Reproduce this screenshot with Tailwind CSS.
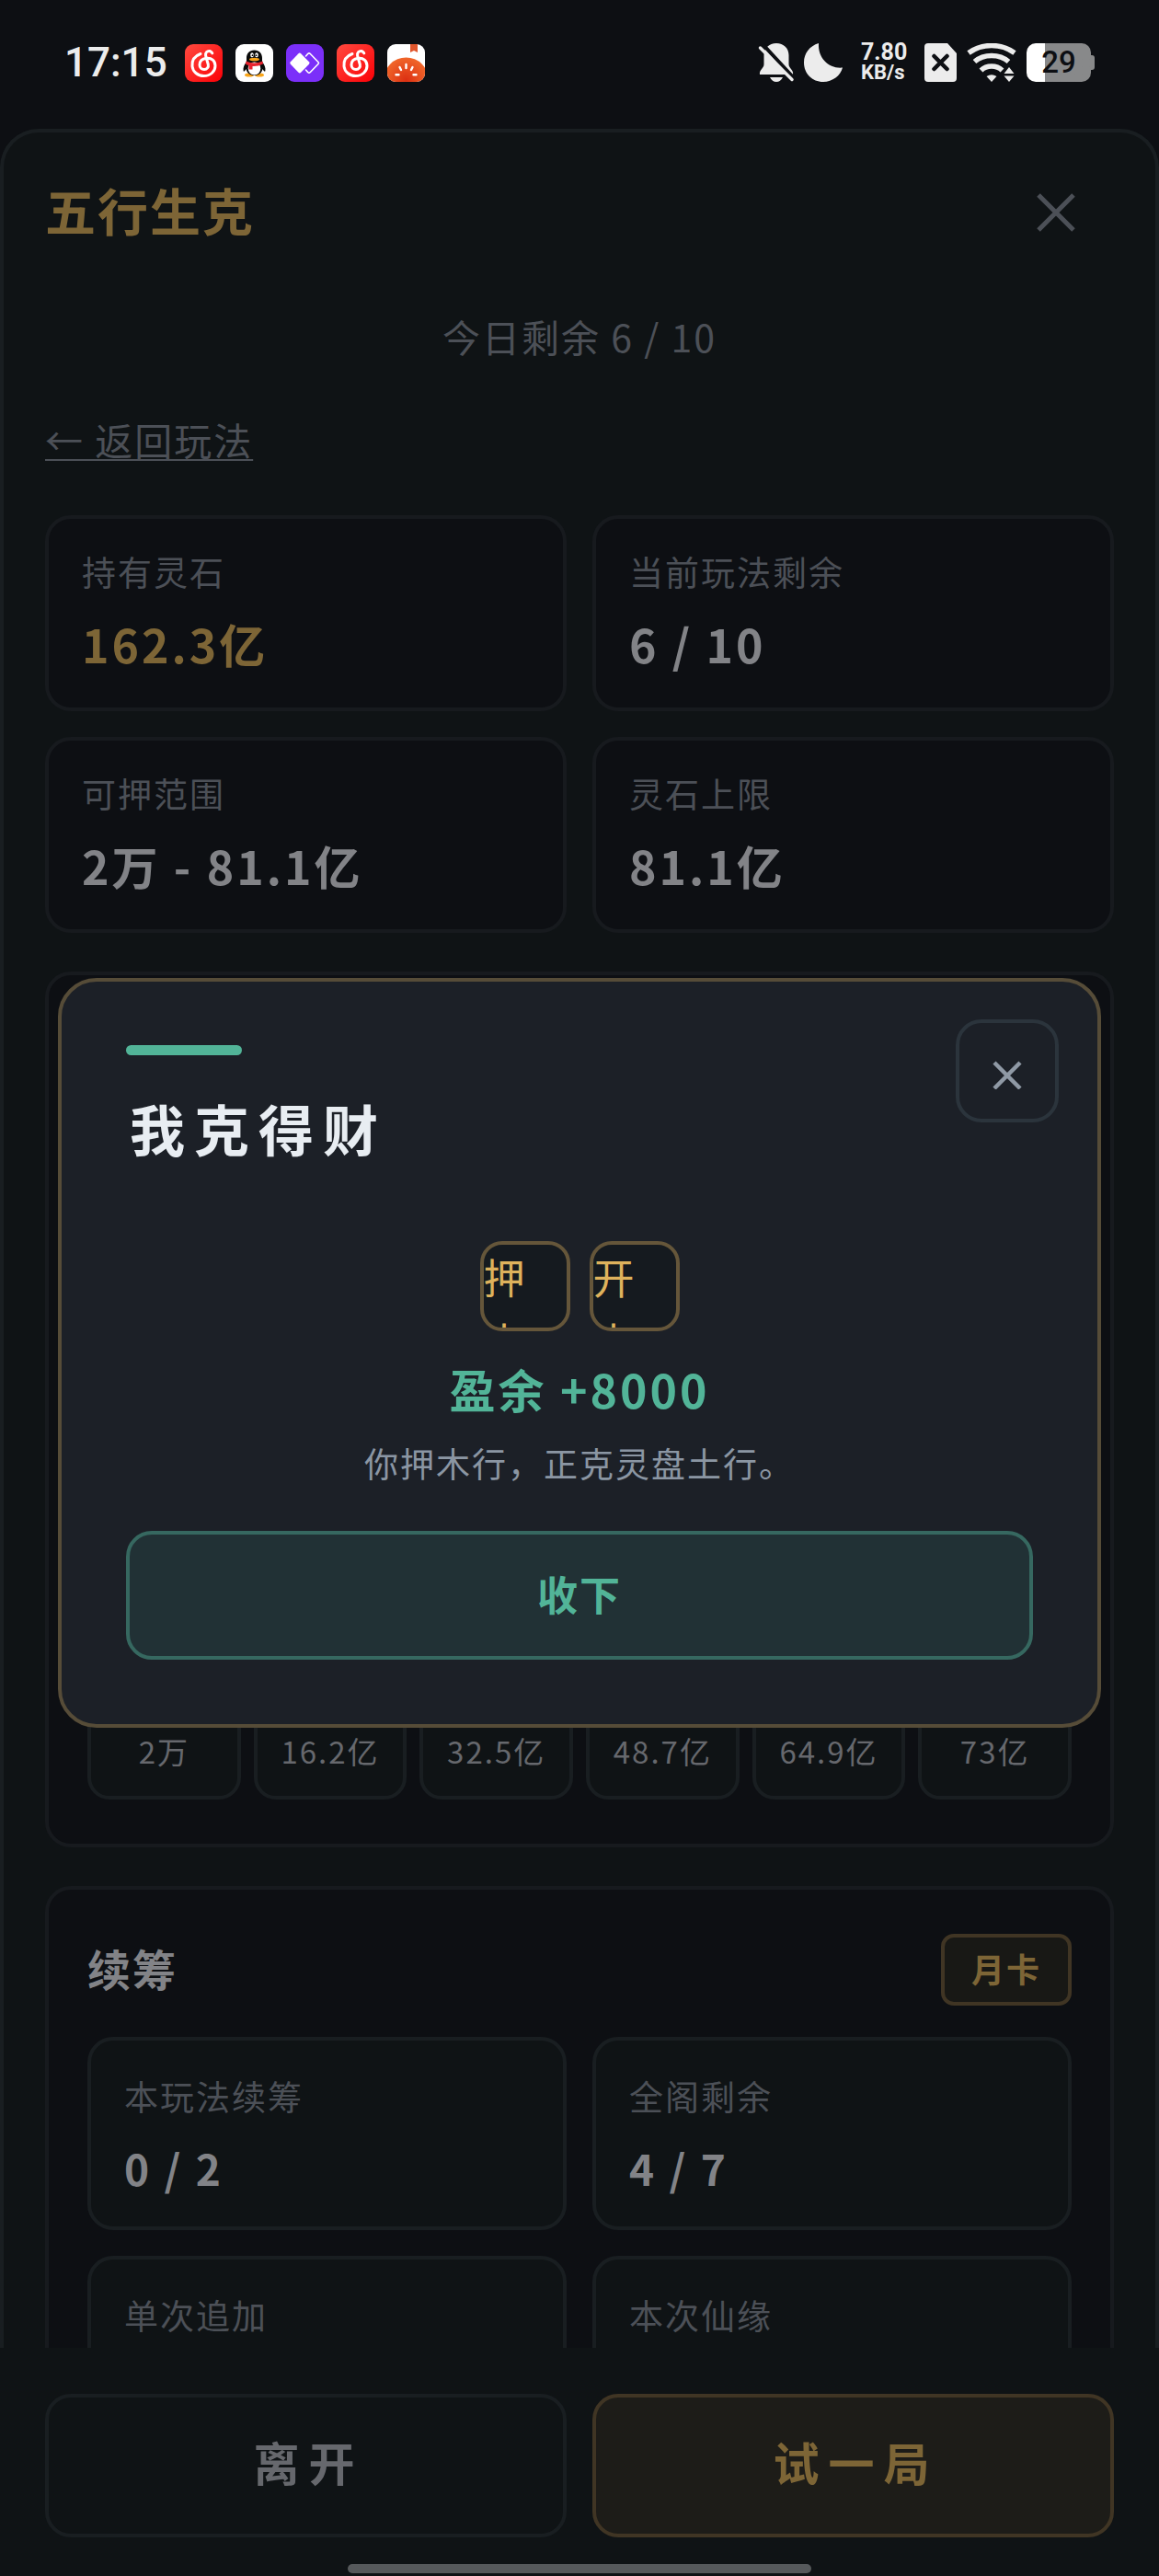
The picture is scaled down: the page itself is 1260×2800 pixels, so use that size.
<!DOCTYPE html>
<html lang="zh-CN">
<head>
  <meta charset="UTF-8">
  <meta name="viewport" content="width=device-width, initial-scale=1.0">
  <title>五行生克</title>
  <script src="https://cdn.jsdelivr.net/npm/@tailwindcss/browser@4"></script>
</head>
<body class="flex h-screen flex-col overflow-hidden bg-[#0d0f13] font-['Noto_Sans_CJK_SC',sans-serif] tracking-[2px] text-[#828387]">

  <!-- Status bar -->
  <div class="flex h-[140px] shrink-0 justify-between px-[70px] pt-[47px] tracking-normal text-[#ececec]">
    <div class="flex h-[42px] items-center gap-[14px]">
      <span class="mr-[5px] font-['Roboto',sans-serif] text-[44px] leading-[42px] font-medium">17:15</span>
      <svg class="size-[41px]" viewBox="0 0 41 41" aria-hidden="true">
        <defs>
          <linearGradient id="music" x1="0" y1="0" x2="1" y2="1">
            <stop offset="0" stop-color="#ff4a3f"/>
            <stop offset="1" stop-color="#fb0007"/>
          </linearGradient>
        </defs>
        <rect width="41" height="41" rx="9" fill="url(#music)"/>
        <path d="M17 10.5C10 13 7.5 18 8 24C8.6 30 14 34.5 20.5 34.5C28 34.5 33 29.5 33 23.5C33 18 29 14.7 23.5 15.3C18.5 16 16 19 16 22.5C16 25.5 18.3 27.5 21 27.5C24 27.5 26 25 25.3 22L22.6 12.5C22 9 24.5 7 27 7.5C28.5 8 29.2 9 29.8 9.8" fill="none" stroke="#fff" stroke-width="3" stroke-linecap="round" stroke-linejoin="round"/>
      </svg>
      <svg class="size-[41px]" viewBox="0 0 41 41" aria-hidden="true">
        <rect width="41" height="41" rx="9" fill="#fff"/>
        <ellipse cx="15" cy="33.5" rx="5" ry="2" fill="#f9a51a"/>
        <ellipse cx="26" cy="33.5" rx="5" ry="2" fill="#f9a51a"/>
        <path d="M20.5 6.5C15 6.5 12 10.5 12 15V19C9.5 22 8 26 8.6 29C9 30.5 10.5 29 11.5 27C12.5 31.5 16 34 20.5 34S28.5 31.5 29.5 27C30.5 29 32 30.5 32.4 29C33 26 31.5 22 29 19V15C29 10.5 26 6.5 20.5 6.5Z" fill="#0a0a0a"/>
        <ellipse cx="20.5" cy="26.5" rx="6.8" ry="7" fill="#fff"/>
        <ellipse cx="18" cy="11.8" rx="1.8" ry="2.6" fill="#fff"/>
        <ellipse cx="23" cy="11.8" rx="1.8" ry="2.6" fill="#fff"/>
        <circle cx="18.5" cy="12.2" r="0.9"/>
        <circle cx="22.5" cy="12.2" r="0.9"/>
        <ellipse cx="20.5" cy="16.5" rx="5.5" ry="1.8" fill="#f9a51a"/>
        <path d="M11.5 18.5Q20.5 22.5 29.5 18.5L30 21.5Q24 24.5 18.5 24V27.5H14.5V23Q12 22.5 11 21.5Z" fill="#e8242f"/>
      </svg>
      <svg class="size-[41px]" viewBox="0 0 41 41" aria-hidden="true">
        <rect width="41" height="41" rx="9" fill="#7b2ff9"/>
        <path d="M21.5 13L23.700 10.500Q25 9.200 26.300 10.500L35 19.500Q36 20.500 35 21.500L26.300 30.500Q25 31.800 23.700 30.500L21.500 28" fill="none" stroke="#fff" stroke-width="1.6" stroke-linejoin="round" stroke-linecap="round"/>
        <path d="M13.5 10.2Q14.8 8.9 16.1 10.2L25 19.3Q26 20.5 25 21.7L16.1 30.8Q14.8 32.1 13.5 30.8L4.8 21.7Q3.8 20.5 4.8 19.3Z" fill="#fff"/>
      </svg>
      <svg class="size-[41px]" viewBox="0 0 41 41" aria-hidden="true">
        <rect width="41" height="41" rx="9" fill="url(#music)"/>
        <path d="M17 10.5C10 13 7.5 18 8 24C8.6 30 14 34.5 20.5 34.5C28 34.5 33 29.5 33 23.5C33 18 29 14.7 23.5 15.3C18.5 16 16 19 16 22.5C16 25.5 18.3 27.5 21 27.5C24 27.5 26 25 25.3 22L22.6 12.5C22 9 24.5 7 27 7.5C28.5 8 29.2 9 29.8 9.8" fill="none" stroke="#fff" stroke-width="3" stroke-linecap="round" stroke-linejoin="round"/>
      </svg>
      <svg class="size-[41px]" viewBox="0 0 41 41" aria-hidden="true">
        <defs>
          <clipPath id="tile"><rect width="41" height="41" rx="9"/></clipPath>
          <radialGradient id="tomato" cx="0.5" cy="0.5" r="0.5">
            <stop offset="0" stop-color="#dc2f12"/>
            <stop offset="1" stop-color="#f0662a"/>
          </radialGradient>
        </defs>
        <g clip-path="url(#tile)">
          <rect width="41" height="41" fill="#fff"/>
          <circle cx="20.5" cy="39" r="24.5" fill="url(#tomato)"/>
          <path d="M25 0H33V9L29 7L25 9Z" fill="#e0562c"/>
          <path d="M20.5 22V26M13.5 25L15 28M27.5 25L26 28M9.5 33.3H12.5M28.5 33.3H31.5" stroke="#fff" stroke-width="2.4" stroke-linecap="round"/>
        </g>
      </svg>
    </div>

    <div class="flex h-[42px] items-center">
      <svg class="h-[42px] w-[40px]" viewBox="0 0 40 42" fill="#ececec" aria-hidden="true">
        <path d="M20 0C12 0 6.5 5.5 6.5 13V23C6.5 27 1 29 2 34H38C39 29 33.5 27 33.5 23V13C33.5 5.5 28 0 20 0Z"/>
        <path d="M13 37H27Q24.5 42 20 42T13 37Z"/>
        <path d="M5 1L41 40" stroke="#0d0f13" stroke-width="4"/>
        <path d="M2.5 5L37 39.5" stroke="#ececec" stroke-width="3.5" stroke-linecap="round"/>
      </svg>
      <svg class="ml-[10px] h-[42px] w-[42px]" viewBox="0 0 42 42" fill="#ececec" aria-hidden="true">
        <path d="M16 0C6 3 0 11 0 21C0 33 9 42 21 42C31 42 40 35 42 26.5C28 28 15 17 16 0Z"/>
      </svg>
      <div class="ml-[20px] flex w-[50px] flex-col font-['Roboto',sans-serif] font-bold">
        <span class="text-[25px] leading-[22px]">7.80</span>
        <span class="text-[22px] leading-[22px]">KB/s</span>
      </div>
      <svg class="ml-[19px] h-[42px] w-[35px]" viewBox="0 0 35 42" aria-hidden="true">
        <path d="M4 0H25L35 11V38Q35 42 31 42H4Q0 42 0 38V4Q0 0 4 0Z" fill="#ececec"/>
        <path d="M10.5 14L24.5 28M24.5 14L10.5 28" stroke="#0d0f13" stroke-width="4.5" stroke-linecap="round"/>
      </svg>
      <svg class="ml-[11px] h-[42px] w-[54px]" viewBox="0 0 54 42" aria-hidden="true">
        <g fill="none" stroke="#ececec" stroke-width="5.5">
          <path d="M2 10.5Q13 2.5 27 2.5T52 10.5"/>
          <path d="M8.5 20Q16 13.5 27 13.5T45.5 20"/>
          <path d="M15.5 29.5Q20 25 27 25T38.5 29.5"/>
        </g>
        <path d="M21.5 36Q27 32.5 32.5 36L27 42Z" fill="#ececec"/>
        <path d="M40.5 33L46 26L51.5 33ZM40.5 35.5L46 42L51.5 35.5Z" fill="#ececec"/>
      </svg>
      <div class="ml-[11px] flex h-[42px] w-[70px] items-center justify-center rounded-[10px] bg-linear-to-r from-white from-28% to-[#88898a] to-28%">
        <span class="font-['Roboto',sans-serif] text-[33px] leading-[42px] font-medium text-[#0d0f13]">29</span>
      </div>
      <span class="h-[16px] w-[4px] rounded-r-[3px] bg-[#88898a]"></span>
    </div>
  </div>

  <!-- Sheet -->
  <main class="flex min-h-0 flex-1 flex-col rounded-t-[42px] bg-[#0f1315]">
    <div class="flex min-h-0 flex-1 flex-col overflow-hidden rounded-t-[42px] border-x-[4px] border-t-[4px] border-[#191e21] px-[45px]">
      <header class="flex h-[174px] shrink-0 items-center justify-between">
        <h1 class="mb-[8px] text-[55px] leading-[80px] font-bold text-[#7d6536]">五行生克</h1>
        <button type="button" aria-label="关闭" class="mr-[7px] flex size-[112px] items-center justify-center">
          <svg class="size-[42px]" viewBox="0 0 42 42" stroke="#4c5057" stroke-width="5" aria-hidden="true">
            <path d="M2 2L40 40M40 2L2 40"/>
          </svg>
        </button>
      </header>

      <p class="mt-[15px] text-center text-[41px] leading-[64px] text-[#4c5057]">今日剩余 6 / 10</p>
      <a href="#" class="mt-[48px] self-start text-[41px] leading-[64px] text-[#4c5057] underline decoration-2 underline-offset-[4px]">← 返回玩法</a>

      <dl class="mt-[51px] grid shrink-0 grid-cols-2 gap-[28px]">
        <div class="rounded-[28px] border-[4px] border-[#171a1e] bg-[#0d0f13] px-[36px] pt-[28px] pb-[32px]">
          <dt class="text-[37px] leading-[58px] text-[#4c5057]">持有灵石</dt>
          <dd class="mt-[12px] text-[50px] leading-[75px] font-bold tracking-[3px] text-[#7d6536]">162.3亿</dd>
        </div>
        <div class="rounded-[28px] border-[4px] border-[#171a1e] bg-[#0d0f13] px-[36px] pt-[28px] pb-[32px]">
          <dt class="text-[37px] leading-[58px] text-[#4c5057]">当前玩法剩余</dt>
          <dd class="mt-[12px] text-[50px] leading-[75px] font-bold tracking-[3px]">6 / 10</dd>
        </div>
        <div class="rounded-[28px] border-[4px] border-[#171a1e] bg-[#0d0f13] px-[36px] pt-[28px] pb-[32px]">
          <dt class="text-[37px] leading-[58px] text-[#4c5057]">可押范围</dt>
          <dd class="mt-[12px] text-[50px] leading-[75px] font-bold tracking-[3px]">2万 - 81.1亿</dd>
        </div>
        <div class="rounded-[28px] border-[4px] border-[#171a1e] bg-[#0d0f13] px-[36px] pt-[28px] pb-[32px]">
          <dt class="text-[37px] leading-[58px] text-[#4c5057]">灵石上限</dt>
          <dd class="mt-[12px] text-[50px] leading-[75px] font-bold tracking-[3px]">81.1亿</dd>
        </div>
      </dl>

      <!-- Stake presets -->
      <section class="mt-[42px] flex min-h-[952px] shrink-0 flex-col justify-end rounded-[28px] border-[4px] border-[#171a1e] bg-[#0d0f13] px-[42px] pb-[48px]">
        <div class="grid grid-cols-6 gap-[14px] text-[33px] leading-[98px] text-[#66686d]">
          <button type="button" class="rounded-[24px] border-[4px] border-[#191e21] bg-[#0f1315]">2万</button>
          <button type="button" class="rounded-[24px] border-[4px] border-[#191e21] bg-[#0f1315]">16.2亿</button>
          <button type="button" class="rounded-[24px] border-[4px] border-[#191e21] bg-[#0f1315]">32.5亿</button>
          <button type="button" class="rounded-[24px] border-[4px] border-[#191e21] bg-[#0f1315]">48.7亿</button>
          <button type="button" class="rounded-[24px] border-[4px] border-[#191e21] bg-[#0f1315]">64.9亿</button>
          <button type="button" class="rounded-[24px] border-[4px] border-[#191e21] bg-[#0f1315]">73亿</button>
        </div>
      </section>

      <!-- Refill -->
      <section class="mt-[42px] shrink-0 rounded-[28px] border-[4px] border-[#171a1e] bg-[#0d0f13] px-[42px] py-[48px]">
        <div class="flex items-center justify-between">
          <h2 class="mb-[4px] text-[47px] leading-[70px] font-bold">续筹</h2>
          <span class="rounded-[14px] border-[4px] border-[#403524] bg-[#181815] px-[29px] pb-[4px] text-[36px] leading-[66px] font-bold text-[#7d6536]">月卡</span>
        </div>
        <dl class="mt-[34px] grid grid-cols-2 gap-[28px]">
          <div class="rounded-[28px] border-[4px] border-[#191e21] bg-[#0f1315] px-[36px] py-[30px]">
            <dt class="text-[37px] leading-[60px] text-[#4c5057]">本玩法续筹</dt>
            <dd class="mt-[14px] text-[46px] leading-[68px] font-bold tracking-[3px]">0 / 2</dd>
          </div>
          <div class="rounded-[28px] border-[4px] border-[#191e21] bg-[#0f1315] px-[36px] py-[30px]">
            <dt class="text-[37px] leading-[60px] text-[#4c5057]">全阁剩余</dt>
            <dd class="mt-[14px] text-[46px] leading-[68px] font-bold tracking-[3px]">4 / 7</dd>
          </div>
          <div class="min-h-[210px] rounded-[28px] border-[4px] border-[#191e21] bg-[#0f1315] px-[36px] py-[30px]">
            <dt class="text-[37px] leading-[60px] text-[#4c5057]">单次追加</dt>
          </div>
          <div class="min-h-[210px] rounded-[28px] border-[4px] border-[#191e21] bg-[#0f1315] px-[36px] py-[30px]">
            <dt class="text-[37px] leading-[60px] text-[#4c5057]">本次仙缘</dt>
          </div>
        </dl>
      </section>
    </div>

    <footer class="shrink-0 px-[49px] pt-[50px]">
      <div class="grid grid-cols-2 gap-[28px] text-[50px] leading-[138px] font-bold tracking-[10px]">
        <button type="button" class="rounded-[28px] border-[4px] border-[#191e21] pb-[10px] pl-[6px] text-[#66686d]">离开</button>
        <button type="button" class="rounded-[28px] border-[4px] border-[#403524] bg-[#1d1c18] pb-[10px] pl-[6px] text-[#7d6536]">试一局</button>
      </div>
      <div class="mx-auto mt-[29px] mb-[3px] h-[10px] w-[504px] max-w-full rounded-full bg-[#56595b]"></div>
    </footer>
  </main>

  <!-- Result dialog -->
  <div class="fixed inset-x-0 top-[140px] bottom-0 flex items-center justify-center px-[63px]">
    <div role="dialog" aria-labelledby="result-title" class="relative w-full rounded-[42px] border-[4px] border-[#564c38] bg-[#1c2027] px-[70px] pt-[69px] pb-[70px]">
      <button type="button" aria-label="关闭" class="absolute top-[41px] right-[42px] flex size-[112px] items-center justify-center rounded-[28px] border-[4px] border-[#2b343c]">
        <svg class="size-[40px]" viewBox="0 0 40 40" stroke="#8f99a5" stroke-width="4.5" aria-hidden="true">
          <path d="M6 11L34 39M34 11L6 39"/>
        </svg>
      </button>
      <div class="h-[11px] w-[126px] rounded-full bg-[#52b498]"></div>
      <h2 id="result-title" class="mt-[35px] pl-1 text-[60px] leading-[88px] font-bold tracking-[10px] text-[#e8edf2]">我克得财</h2>

      <div class="mt-[79px] flex justify-center gap-[21px] text-[45px] leading-[70px] text-[#deb25c]">
        <div class="size-[98px] overflow-hidden rounded-[24px] border-[4px] border-[#65563a] bg-[#151a1f]">押<br>木</div>
        <div class="size-[98px] overflow-hidden rounded-[24px] border-[4px] border-[#65563a] bg-[#151a1f]">开<br>土</div>
      </div>

      <p class="mt-[27px] text-center text-[50px] leading-[70px] font-bold tracking-[3px] text-[#52b498]">盈余 +8000</p>
      <p class="mt-[16px] text-center text-[37px] leading-[60px] text-[#8b96a3]">你押木行，正克灵盘土行。</p>
      <button type="button" class="mt-[44px] w-full rounded-[28px] border-[4px] border-[#366860] bg-[#213135] pb-[4px] text-[44px] leading-[128px] font-bold text-[#52b498]">收下</button>
    </div>
  </div>

</body>
</html>
